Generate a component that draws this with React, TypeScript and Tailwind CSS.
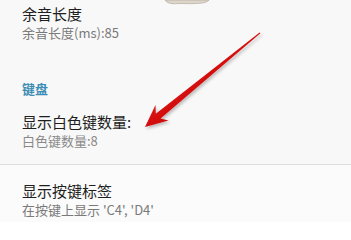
import React from "react";

const font = {
  fontFamily: '"Noto Sans CJK SC", Roboto, "Noto Sans", sans-serif',
};

function Arrow() {
  return (
    <svg
      className="absolute left-0 top-0 pointer-events-none"
      width="351"
      height="222"
      viewBox="0 0 351 222"
    >
      <defs>
        <linearGradient id="arrowShade" x1="0" y1="0" x2="1" y2="1">
          <stop offset="0" stopColor="#f01a1a" />
          <stop offset="1" stopColor="#b80808" />
        </linearGradient>
        <filter id="arrowShadow" x="-20%" y="-20%" width="140%" height="140%">
          <feDropShadow dx="1.5" dy="2" stdDeviation="1.5" floodColor="#000" floodOpacity="0.25" />
        </filter>
      </defs>
      <polygon
        filter="url(#arrowShadow)"
        fill="url(#arrowShade)"
        points="145,127 168.5,120.5 160.6,118.4 260.4,33.3 259.6,32.5 155.8,113.8 155.5,105"
      />
    </svg>
  );
}

function Blob() {
  return (
    <svg className="absolute left-[164px] top-0" width="46" height="5" viewBox="0 0 46 5">
      <path
        d="M1 0 C3 3.5 8 4 14 3.6 C20 3.2 24 4 30 3.6 C36 3.2 42 3.4 45 0 Z"
        fill="#ddd5c9"
        stroke="#b3ab9f"
        strokeWidth="0.7"
      />
    </svg>
  );
}

export default function App() {
  return (
    <div className="relative w-[351px] h-[222px] overflow-hidden bg-[#f8f8f8]" style={font}>
      <Blob />
      <div className="px-[22px] pt-[4px]">
        <div className="text-[15px] leading-[20px] text-[#1f1f1f]">余音长度</div>
        <div className="text-[13px] leading-[18px] text-[#7a7a7a]">余音长度(ms):85</div>
      </div>
      <div className="px-[22px] pt-[38px] text-[13px] leading-[18px] font-bold text-[#3d8db5]">
        键盘
      </div>
      <div className="px-[22px] pt-[14px] pb-[14px]">
        <div className="text-[15px] leading-[20px] text-[#1f1f1f]">显示白色键数量:</div>
        <div className="text-[13px] leading-[18px] text-[#8a8a8a]">白色键数量:8</div>
      </div>
      <div className="border-t border-[#dcdcdc] bg-[#fbfbfb] h-full">
        <div className="px-[22px] pt-[16px]">
          <div className="text-[15px] leading-[20px] text-[#1f1f1f]">显示按键标签</div>
          <div className="text-[13px] leading-[18px] text-[#7a7a7a]">在按键上显示 'C4', 'D4'</div>
        </div>
      </div>
      <Arrow />
    </div>
  );
}
